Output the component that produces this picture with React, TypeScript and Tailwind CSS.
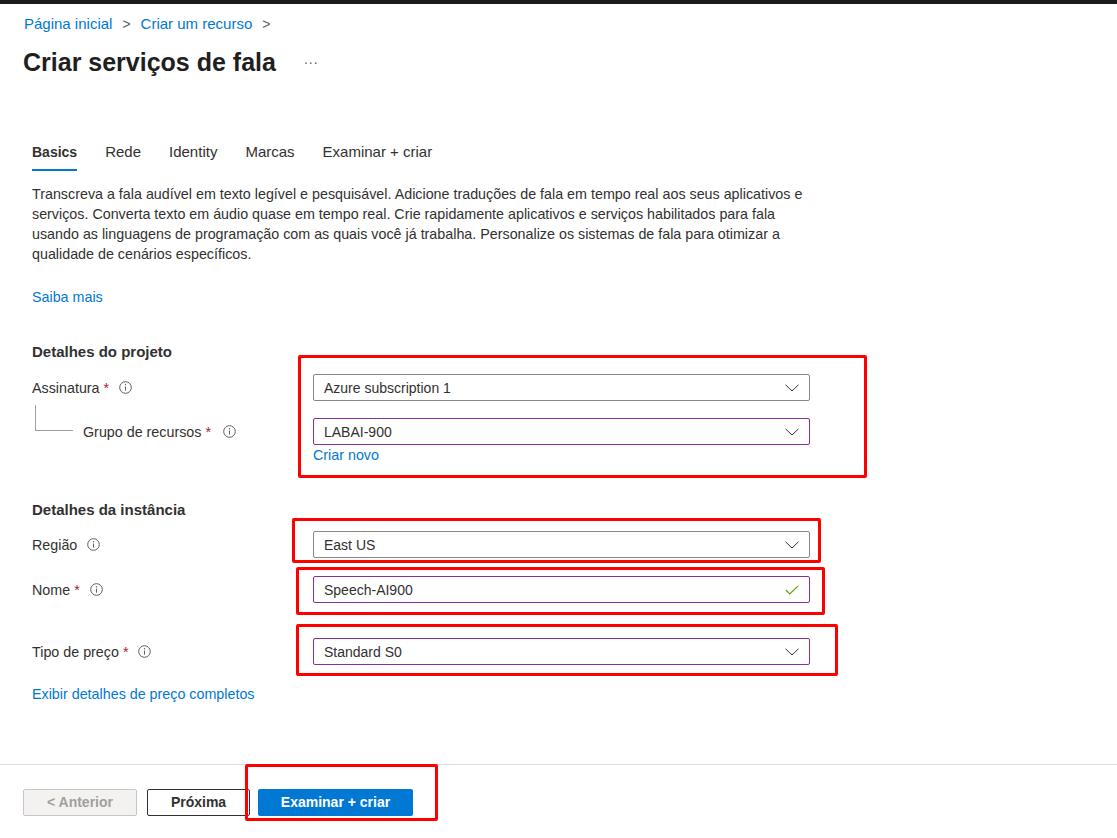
import React from 'react'

const FONT = { fontFamily: '"Segoe UI", "Liberation Sans", Arial, sans-serif' }

function InfoIcon() {
  return (
    <svg width="13" height="13" viewBox="0 0 13 13" className="shrink-0">
      <circle cx="6.5" cy="6.5" r="5.8" fill="none" stroke="#605e5c" strokeWidth="1" />
      <line x1="6.5" y1="5.6" x2="6.5" y2="9.6" stroke="#605e5c" strokeWidth="1" />
      <circle cx="6.5" cy="3.8" r="0.7" fill="#605e5c" />
    </svg>
  )
}

function Chevron() {
  return (
    <svg width="14" height="8" viewBox="0 0 14 8" className="shrink-0">
      <path d="M0.5 0.8 L7 7 L13.5 0.8" fill="none" stroke="#323130" strokeWidth="1" />
    </svg>
  )
}

function Check() {
  return (
    <svg width="14" height="10" viewBox="0 0 14 10" className="shrink-0">
      <path d="M0.8 5 L4.8 9 L13.2 0.8" fill="none" stroke="#57a300" strokeWidth="1.1" />
    </svg>
  )
}

function Req() {
  return <span className="text-[#a4262c] ml-1">*</span>
}

function Field({ value, purple, check }: { value: string; purple?: boolean; check?: boolean }) {
  return (
    <div
      className={`w-[497px] h-[27px] flex items-center justify-between pl-[10px] pr-[10px] border rounded-[2px] bg-white text-[14px] text-[#323130] ${
        purple ? 'border-[#8a2da5]' : 'border-[#8a8886]'
      }`}
    >
      <span>{value}</span>
      {check ? <Check /> : <Chevron />}
    </div>
  )
}

function RedBox({ className }: { className: string }) {
  return <div className={`absolute border-[3px] border-[#ff0000] rounded-[2px] pointer-events-none ${className}`} />
}

export default function App() {
  const tabs = ['Rede', 'Identity', 'Marcas', 'Examinar + criar']

  return (
    <div className="relative w-[1117px] h-[838px] bg-white overflow-hidden text-[#323130]" style={FONT}>
      <div className="h-[4px] bg-[#1b1b1b]" />

      {/* breadcrumb */}
      <div className="pl-[24px] pt-[10px] flex items-center gap-[10px] text-[15px] leading-[20px] text-[#0078d4]">
        <span>Página inicial</span>
        <span className="text-[#605e5c] text-[14px]">&gt;</span>
        <span>Criar um recurso</span>
        <span className="text-[#605e5c] text-[14px]">&gt;</span>
      </div>

      {/* title */}
      <div className="pl-[23px] mt-[12px] flex items-center h-[32px]">
        <h1 className="text-[25px] leading-[32px] font-semibold text-[#201f1e]">Criar serviços de fala</h1>
        <span className="ml-[28px] text-[14px] text-[#605e5c] tracking-[1px] -mt-[6px]">...</span>
      </div>

      {/* tabs */}
      <div className="pl-[32px] mt-[64px] flex items-start gap-[28px] text-[15px]">
        <div className="flex flex-col">
          <span className="leading-[20px] text-[14px] font-semibold text-[#323130]">Basics</span>
          <span className="mt-[7px] h-[2px] bg-[#0078d4]" />
        </div>
        {tabs.map((t) => (
          <div key={t} className="flex flex-col">
            <span className="leading-[20px] text-[#323130]">{t}</span>
            <span className="mt-[7px] h-[2px]" />
          </div>
        ))}
      </div>

      {/* description and form */}
      <div className="pl-[32px] mt-[13px] text-[14.3px] leading-[20px] text-[#323130]">
        <p>
          Transcreva a fala audível em texto legível e pesquisável. Adicione traduções de fala em tempo real aos seus aplicativos e
          <br />
          serviços. Converta texto em áudio quase em tempo real. Crie rapidamente aplicativos e serviços habilitados para fala
          <br />
          usando as linguagens de programação com as quais você já trabalha. Personalize os sistemas de fala para otimizar a
          <br />
          qualidade de cenários específicos.
        </p>
        <p className="mt-[23px] text-[#0078d4]">Saiba mais</p>

        {/* project details */}
        <h2 className="mt-[35px] text-[15px] leading-[20px] font-semibold text-[#323130]">Detalhes do projeto</h2>

        <div className="mt-[12px] flex items-center">
          <div className="w-[281px] flex items-center gap-[10px]">
            <span>
              Assinatura
              <Req />
            </span>
            <InfoIcon />
          </div>
          <Field value="Azure subscription 1" />
        </div>

        <div className="mt-[17px] flex items-center">
          <div className="w-[281px] flex items-center">
            <div className="w-[51px] h-[27px] flex -mt-[30px]">
              <div className="ml-[3px] w-[38px] h-[26px] border-l border-b border-[#a19f9d] mt-[2px]" />
            </div>
            <span>
              Grupo de recursos
              <Req />
            </span>
            <span className="ml-[12px]">
              <InfoIcon />
            </span>
          </div>
          <Field value="LABAI-900" purple />
        </div>
        <div className="pl-[281px] text-[#0078d4]">Criar novo</div>

        {/* instance details */}
        <h2 className="mt-[35px] text-[15px] leading-[20px] font-semibold text-[#323130]">Detalhes da instância</h2>

        <div className="mt-[11px] flex items-center">
          <div className="w-[281px] flex items-center gap-[10px]">
            <span>Região</span>
            <InfoIcon />
          </div>
          <Field value="East US" />
        </div>

        <div className="mt-[18px] flex items-center">
          <div className="w-[281px] flex items-center gap-[10px]">
            <span>
              Nome
              <Req />
            </span>
            <InfoIcon />
          </div>
          <Field value="Speech-AI900" purple check />
        </div>

        <div className="mt-[35px] flex items-center">
          <div className="w-[281px] flex items-center gap-[10px]">
            <span>
              Tipo de preço
              <Req />
            </span>
            <InfoIcon />
          </div>
          <Field value="Standard S0" purple />
        </div>

        <p className="mt-[19px] text-[#0078d4]">Exibir detalhes de preço completos</p>
      </div>

      {/* footer */}
      <div className="absolute left-0 right-0 top-[764px] border-t border-[#e1dfdd]">
        <div className="pl-[23px] pt-[24px] flex items-center gap-[10px] text-[14px]">
          <button className="w-[114px] h-[27px] rounded-[2px] border border-[#c8c6c4] bg-[#f3f2f1] text-[#a19f9d] font-semibold">
            &lt; Anterior
          </button>
          <button className="w-[103px] h-[27px] rounded-[2px] border border-[#323130] bg-white text-[#323130] font-semibold">
            Próxima
          </button>
          <button className="ml-[-2px] w-[155px] h-[27px] rounded-[2px] bg-[#0078d4] text-white font-semibold">
            Examinar + criar
          </button>
        </div>
      </div>

      {/* annotation boxes */}
      <RedBox className="left-[298px] top-[355px] w-[569px] h-[123px]" />
      <RedBox className="left-[292px] top-[518px] w-[529px] h-[45px]" />
      <RedBox className="left-[296px] top-[567px] w-[529px] h-[48px]" />
      <RedBox className="left-[296px] top-[624px] w-[542px] h-[52px]" />
      <RedBox className="left-[245px] top-[764px] w-[193px] h-[57px]" />
    </div>
  )
}
